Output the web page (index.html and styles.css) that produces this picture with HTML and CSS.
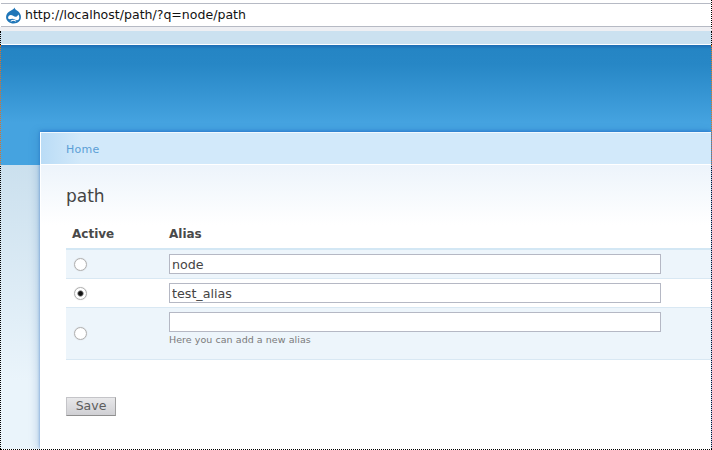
FILE: index.html
```html
<!DOCTYPE html>
<html lang="en">
<head>
<meta charset="utf-8">
<title>path</title>
<link rel="stylesheet" href="styles.css">
</head>
<body>
<div class="frame">
  <div class="addressbar">
    <div class="address-field">
      <svg class="favicon" viewBox="1 0 14 16" width="15" height="17" aria-hidden="true">
        <path fill="#1f76b8" d="M8.9 0.4C9.2 2.2 11 2.9 12.3 4.1C14 5.6 15 7.4 15 9.5C15 13.1 12 15.6 8.2 15.6C4.3 15.6 1 13.1 1 9.4C1 6.6 2.9 4.8 4.9 3.7C6.5 2.8 8.3 2.2 8.9 0.4Z"/>
        <path fill="#ffffff" d="M2.9 10.2C2.9 7.8 5.4 6.6 7.6 8.2C9.6 9.8 11.2 9.6 12.6 7C14.2 9.6 13.4 12.4 11.4 12.4C9.8 12.4 8.6 11 7 11C5.4 11 3.2 12.6 2.9 10.2Z"/>
        <path fill="#ffffff" d="M5.4 13C6.8 11.9 8.8 11.7 10.4 13C10.8 13.4 10.4 13.9 9.9 13.6C8.4 12.8 7.4 12.8 6 13.6C5.4 13.9 5 13.4 5.4 13Z"/>
      </svg>
      <span class="url">http://localhost/path/?q=node/path</span>
    </div>
  </div>
  <div class="page">
    <div class="pale-band"></div>
    <div class="hero"></div>
    <div class="layout">
      <div class="side"></div>
      <main class="panel">
        <nav class="crumbs"><a class="crumb-link" href="#">Home</a></nav>
        <div class="content">
          <h1 class="title">path</h1>
          <form class="alias-form">
            <table class="aliases">
              <thead>
                <tr><th class="col-active">Active</th><th>Alias</th></tr>
              </thead>
              <tbody>
                <tr class="row-tint row-a">
                  <td class="cell-radio"><input class="radio" type="radio" name="alias"></td>
                  <td class="cell-alias"><input class="text-input" type="text" value="node"></td>
                </tr>
                <tr class="row-b">
                  <td class="cell-radio"><input class="radio" type="radio" name="alias" checked></td>
                  <td class="cell-alias"><input class="text-input" type="text" value="test_alias"></td>
                </tr>
                <tr class="row-tint row-c">
                  <td class="cell-radio"><input class="radio" type="radio" name="alias"></td>
                  <td class="cell-alias">
                    <input class="text-input" type="text">
                    <div class="hint">Here you can add a new alias</div>
                  </td>
                </tr>
              </tbody>
            </table>
            <button class="save" type="button">Save</button>
          </form>
        </div>
      </main>
    </div>
  </div>
</div>
</body>
</html>
```
FILE: styles.css
```css
html, body {
  margin: 0;
  padding: 0;
  background: #fff;
  overflow: hidden;
}
.frame {
  width: 712px;
  height: 450px;
  box-sizing: border-box;
  display: flex;
  flex-direction: column;
  overflow: hidden;
  font-family: "DejaVu Sans", sans-serif;
  color: #444;
  border-bottom: 1px dotted #000;
}
.addressbar {
  height: 31px;
  box-sizing: border-box;
  padding-top: 3px;
  background: #fff;
  flex: none;
  border-bottom: 4px solid #eeeff3;
  border-right: 1px dotted #000;
}
.address-field {
  height: 24px;
  box-sizing: border-box;
  margin-left: 1px;
  padding-left: 5px;
  display: flex;
  align-items: center;
  gap: 4px;
  background: #fff;
  border-top: 1px solid #b6bac4;
  border-bottom: 1px solid #b6bac4;
}
.favicon { flex: none; }
.url {
  font-size: 12.55px;
  line-height: 20px;
  color: #111;
}
.page {
  flex: 1;
  min-height: 0;
  display: flex;
  flex-direction: column;
  border-left: 1px dotted #000;
  border-right: 1px dotted #000;
  background: linear-gradient(#cbe0ee 134px, #eaf4fb 350px);
}
.pale-band {
  height: 13px;
  background: #cbe1f0;
  border-bottom: 1px solid #fff;
  flex: none;
}
.hero {
  height: 120px;
  flex: none;
  margin-left: -1px;
  border-left: 1px dotted #d9762a;
  margin-right: -1px;
  border-right: 1px dotted #d9762a;
  box-sizing: border-box;
  background: linear-gradient(#1e6db4 0, #2585c4 4px, #2787c6 20px, #45a3e0 78px, #45a3e0 100%);
}
.layout {
  flex: 1;
  min-height: 0;
  margin-top: -33px;
  display: flex;
}
.side {
  width: 39px;
  flex: none;
}
.panel {
  flex: 1;
  min-width: 0;
  display: flex;
  flex-direction: column;
  border-left: 1px solid #fff;
  box-shadow: -3px 0 8px rgba(40, 110, 170, 0.22), 0 -1px 3px rgba(20, 90, 200, 0.55);
  background: #fff;
}
.crumbs {
  height: 33px;
  box-sizing: border-box;
  flex: none;
  padding: 10px 0 0 25px;
  font-size: 11px;
  letter-spacing: 0.3px;
  line-height: 13px;
  border-top: 1px solid #f0f8fe;
  border-bottom: 1px solid #fff;
  background: linear-gradient(90deg, #badcf6, #d2e9fa 40px);
}
.crumb-link {
  color: #5b9fd6;
  text-decoration: none;
}
.content {
  flex: 1;
  min-height: 0;
  padding-left: 25px;
  background: linear-gradient(#edf4fb, #fff 60px);
}
.title {
  margin: 0;
  padding-top: 21px;
  font-size: 17px;
  line-height: 21px;
  font-weight: normal;
  color: #444;
}
.aliases {
  margin-top: 9px;
  width: 100%;
  border-collapse: collapse;
  table-layout: fixed;
}
.aliases th {
  height: 28px;
  padding: 4px 0 0;
  text-align: left;
  font-size: 12px;
  font-weight: bold;
  color: #494949;
  border-bottom: 2px solid #d3e7f4;
}
.aliases th.col-active {
  width: 97px;
  padding: 4px 0 0 6px;
}
.aliases td { padding: 0; border-bottom: 1px solid #d9e8f3; }
.row-tint { background: #edf5fb; }
.row-a td { height: 28px; }
.row-b td { height: 28px; }
.row-c td { height: 47px; }
.cell-radio { vertical-align: middle; }
.aliases td.cell-radio { padding-left: 8px; height: 28px; }
.row-c td.cell-radio { height: 51px; }
.cell-alias { vertical-align: top; }
.row-a .cell-alias, .row-b .cell-alias { vertical-align: middle; }
.aliases .row-c .cell-alias { padding-top: 4px; }
.radio {
  appearance: none;
  display: block;
  margin: 0;
  width: 13px;
  height: 13px;
  box-sizing: border-box;
  border: 1px solid #b0b0b0;
  border-radius: 50%;
  background: radial-gradient(circle at 50% 50%, #fff 60%, #e4e4e4 100%);
  box-shadow: 0 0 1px #c4c4c4;
}
.radio:checked {
  background: radial-gradient(circle at 50% 50%, #111 0, #111 24%, #fff 46%, #fff 65%, #ddd 100%);
}
.text-input {
  display: block;
  width: 492px;
  height: 20px;
  box-sizing: border-box;
  margin: 0;
  padding: 0 2px;
  border: 1px solid #b5b8c4;
  background: #fff;
  font-family: "DejaVu Sans", sans-serif;
  font-size: 12.7px;
  color: #444;
  border-radius: 0;
  outline: 0;
}
.hint {
  margin: 2px 0 0;
  font-size: 9.5px;
  line-height: 12px;
  color: #7a7a7a;
  letter-spacing: 0.05px;
}
.save {
  display: block;
  margin: 37px 0 0;
  width: 50px;
  height: 19px;
  padding: 0 0 2px;
  font-family: "DejaVu Sans", sans-serif;
  font-size: 12.5px;
  color: #5c5c5c;
  border: 1px solid #c4c4c8;
  border-right-color: #a0a0a0;
  border-bottom-color: #8f8f8f;
  border-radius: 0;
  background: linear-gradient(#e8e8ea, #d0d0d4);
}
```
